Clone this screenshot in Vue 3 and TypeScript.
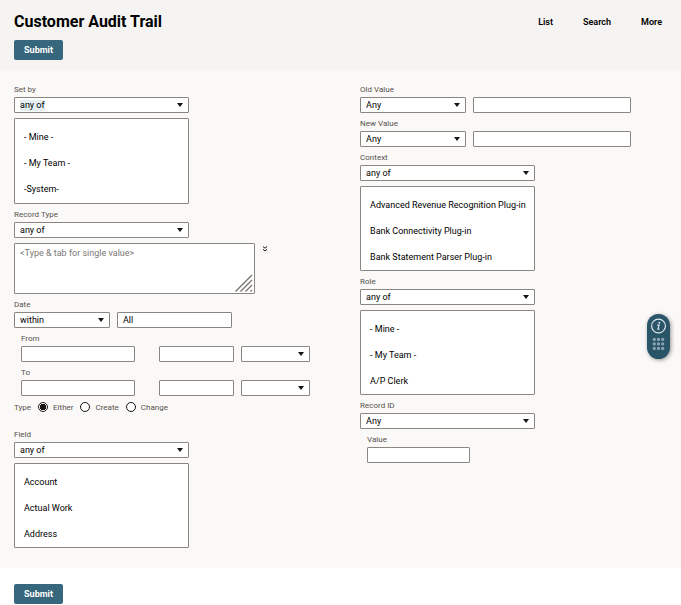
<script setup lang="ts">
import { ref } from 'vue'

const anyOf = ['any of', 'none of']
const people = ['- Mine -', '- My Team -', '-System-']
const fields = ['Account', 'Actual Work', 'Address']
const contexts = [
  'Advanced Revenue Recognition Plug-in',
  'Bank Connectivity Plug-in',
  'Bank Statement Parser Plug-in',
]
const roles = ['- Mine -', '- My Team -', 'A/P Clerk']
const types = ['Either', 'Create', 'Change']
const chosenType = ref('Either')
const dateRange = ref('All')
const dots = [0, 1, 2, 3, 4, 5, 6, 7, 8]
</script>

<template>
  <div class="page">
    <header class="top">
      <div class="top-row">
        <h1>Customer Audit Trail</h1>
        <nav>
          <a href="#list">List</a>
          <a href="#search">Search</a>
          <a href="#more">More</a>
        </nav>
      </div>
      <button class="submit" type="submit" form="audit">Submit</button>
    </header>

    <form id="audit" class="filters" @submit.prevent>
      <div class="column">
        <label class="caption" for="set-by">Set by</label>
        <span class="pick wide">
          <select id="set-by" class="marked"><option v-for="o in anyOf" :key="o">{{ o }}</option></select>
        </span>
        <select class="list tall" multiple size="3" aria-label="Set by values">
          <option v-for="o in people" :key="o">{{ o }}</option>
        </select>

        <label class="caption" for="record-type">Record Type</label>
        <span class="pick wide">
          <select id="record-type"><option v-for="o in anyOf" :key="o">{{ o }}</option></select>
        </span>
        <div class="type-entry">
          <div class="area">
            <textarea placeholder="&lt;Type &amp; tab for single value&gt;" aria-label="Record type values"></textarea>
            <svg class="grip" viewBox="0 0 18 18" aria-hidden="true">
              <path d="M0.5 17.5L17 1M5.5 17.5L17 6M10.5 17.5L17 11M15.5 17.5L17 16" />
            </svg>
          </div>
          <button class="expand" type="button" aria-label="Show choices">
            <svg viewBox="0 0 6 6" aria-hidden="true"><path d="M1 0.5L3 2.2L5 0.5M1 3.3L3 5L5 3.3" /></svg>
          </button>
        </div>

        <label class="caption" for="date">Date</label>
        <div class="line">
          <span class="pick short"><select id="date"><option>within</option></select></span>
          <input v-model="dateRange" class="range" type="text" aria-label="Date range" />
        </div>
        <div class="indent">
          <label class="caption" for="from">From</label>
          <div class="line">
            <input id="from" class="day" type="text" />
            <input class="period" type="text" aria-label="From period" />
            <span class="pick unit"><select aria-label="From unit"><option></option></select></span>
          </div>
          <label class="caption" for="to">To</label>
          <div class="line">
            <input id="to" class="day" type="text" />
            <input class="period" type="text" aria-label="To period" />
            <span class="pick unit"><select aria-label="To unit"><option></option></select></span>
          </div>
        </div>
        <div class="types" role="radiogroup" aria-labelledby="type-caption">
          <span id="type-caption">Type</span>
          <label v-for="t in types" :key="t">
            <input v-model="chosenType" type="radio" name="type" :value="t" />{{ t }}
          </label>
        </div>

        <label class="caption" for="field">Field</label>
        <span class="pick wide">
          <select id="field"><option v-for="o in anyOf" :key="o">{{ o }}</option></select>
        </span>
        <select class="list" multiple size="3" aria-label="Field values">
          <option v-for="o in fields" :key="o">{{ o }}</option>
        </select>
      </div>

      <div class="column">
        <label class="caption" for="old-value">Old Value</label>
        <div class="line">
          <span class="pick medium"><select id="old-value"><option>Any</option></select></span>
          <input class="text" type="text" aria-label="Old value text" />
        </div>
        <label class="caption" for="new-value">New Value</label>
        <div class="line">
          <span class="pick medium"><select id="new-value"><option>Any</option></select></span>
          <input class="text" type="text" aria-label="New value text" />
        </div>

        <label class="caption" for="context">Context</label>
        <span class="pick wide">
          <select id="context"><option v-for="o in anyOf" :key="o">{{ o }}</option></select>
        </span>
        <select class="list" multiple size="3" aria-label="Context values">
          <option v-for="o in contexts" :key="o">{{ o }}</option>
        </select>

        <label class="caption" for="role">Role</label>
        <span class="pick wide">
          <select id="role"><option v-for="o in anyOf" :key="o">{{ o }}</option></select>
        </span>
        <select class="list" multiple size="3" aria-label="Role values">
          <option v-for="o in roles" :key="o">{{ o }}</option>
        </select>

        <label class="caption" for="record-id">Record ID</label>
        <span class="pick wide"><select id="record-id"><option>Any</option></select></span>
        <div class="indent">
          <label class="caption" for="value">Value</label>
          <input id="value" class="number" type="text" />
        </div>
      </div>
    </form>

    <footer>
      <button class="submit" type="submit" form="audit">Submit</button>
    </footer>

    <button class="helper" type="button" aria-label="Help">
      <svg viewBox="0 0 24 46" aria-hidden="true">
        <circle class="ring" cx="12" cy="12" r="7.2" />
        <circle class="ink" cx="12.9" cy="8.7" r="1" />
        <path class="stem" d="M10.6 11.2H12.6L11.4 15.3H13" />
        <circle
          v-for="d in dots"
          :key="d"
          class="dot"
          :cx="7.6 + (d % 3) * 4.4"
          :cy="26 + Math.floor(d / 3) * 4.7"
          r="1.7"
        />
      </svg>
    </button>
  </div>
</template>

<style>
body {
  margin: 0;
  background: #fff;
}
</style>

<style scoped>
.page,
.page * {
  box-sizing: border-box;
}
.page {
  font-family: Roboto, 'Open Sans', sans-serif;
  font-size: 9px;
  color: #000;
}
button,
input,
select,
textarea {
  margin: 0;
  font: inherit;
  color: inherit;
}
.top {
  padding: 10px 19px 10px 14px;
  background: #f5f4f2;
}
.top-row {
  display: flex;
  align-items: center;
  justify-content: space-between;
  height: 24px;
  margin-bottom: 6px;
}
h1 {
  margin: 0;
  font-size: 16px;
  line-height: 24px;
  color: #000;
}
nav {
  display: flex;
  gap: 30px;
}
nav a {
  color: #000;
  font-weight: 600;
  text-decoration: none;
}
.submit {
  display: block;
  width: 49px;
  height: 20px;
  padding: 0;
  border: 0;
  border-radius: 2px;
  background: #36677d;
  color: #fff;
  font-weight: 700;
}
.filters {
  display: grid;
  grid-template-columns: 53fr 47fr;
  padding: 9px 14px 20px;
  background: #fbf9f8;
}
.column {
  display: flex;
  flex-direction: column;
  align-items: flex-start;
}
.caption {
  display: block;
  height: 18px;
  font-size: 8px;
  line-height: 22px;
  color: #55514d;
}
.line {
  display: flex;
}
.indent {
  padding-left: 7px;
}
input[type='text'],
select,
textarea {
  border: 1px solid #8a8783;
  border-radius: 1px;
  background: #fff;
  outline: 0;
}
input[type='text'] {
  display: block;
  height: 16px;
  padding: 0 5px;
}
.pick {
  position: relative;
  display: block;
  height: 16px;
}
.pick select {
  display: block;
  width: 100%;
  height: 16px;
  padding: 0 5px;
  appearance: none;
}
.pick::after {
  content: '';
  position: absolute;
  top: 6px;
  right: 6px;
  border: 3px solid transparent;
  border-top: 4px solid #161513;
  border-bottom: 0;
  pointer-events: none;
}
.pick .marked {
  background: linear-gradient(#e4eff2, #e4eff2) 5px 2px / 25px 11px no-repeat #fff;
}
.wide {
  width: 175px;
}
.medium {
  width: 106px;
}
.short {
  width: 96px;
}
.unit {
  width: 69px;
  margin-left: 7px;
}
.range {
  width: 115px;
  margin-left: 7px;
}
.text {
  width: 158px;
  margin-left: 7px;
}
.day {
  width: 114px;
}
.period {
  width: 75px;
  margin-left: 24px;
}
.number {
  width: 103px;
}
.list {
  width: 175px;
  height: 85px;
  margin-top: 5px;
  padding: 5px 0 0;
  overflow: hidden;
  appearance: none;
  scrollbar-width: none;
}
.tall {
  height: 86px;
}
.list option {
  height: 26px;
  padding: 8px 9px;
  color: #000;
}
.type-entry {
  display: flex;
  align-items: flex-start;
  gap: 7px;
  margin-top: 5px;
}
.area {
  position: relative;
}
textarea {
  display: block;
  width: 241px;
  height: 51px;
  padding: 2px 5px;
  line-height: 14px;
  resize: none;
}
textarea::placeholder {
  color: #7b7875;
}
.grip {
  position: absolute;
  right: 2px;
  bottom: 2px;
  width: 18px;
  height: 18px;
  fill: none;
  stroke: #77736f;
  stroke-width: 1.3;
  pointer-events: none;
}
.expand {
  padding: 3px 0 0;
  border: 0;
  background: none;
}
.expand svg {
  display: block;
  width: 6px;
  height: 6px;
  fill: none;
  stroke: #161513;
  stroke-width: 1;
}
.types {
  display: flex;
  align-items: center;
  gap: 7px;
  height: 28px;
  padding: 0 0 6px;
  font-size: 8px;
  color: #55514d;
}
.types label {
  display: flex;
  align-items: center;
  gap: 5px;
}
.types input {
  width: 10px;
  height: 10px;
  border: 1px solid #161513;
  border-radius: 50%;
  background: #fff;
  appearance: none;
}
.types input:checked {
  background: radial-gradient(circle, #161513 0 3px, #fff 3px);
}
footer {
  padding: 16px 14px 1px;
  background: #fff;
}
.helper {
  position: fixed;
  top: 314px;
  right: 11px;
  width: 23px;
  height: 45px;
  padding: 0;
  border: 0;
  border-radius: 12px;
  background: #2a5468;
  box-shadow: 1px 1px 4px rgba(0, 0, 0, 0.4);
}
.helper svg {
  display: block;
  width: 23px;
  height: 45px;
}
.ring {
  fill: none;
  stroke: #dfe9ed;
  stroke-width: 1.2;
}
.ink {
  fill: #dfe9ed;
}
.stem {
  fill: none;
  stroke: #dfe9ed;
  stroke-width: 1.2;
}
.dot {
  fill: #8ba3ae;
}
</style>
